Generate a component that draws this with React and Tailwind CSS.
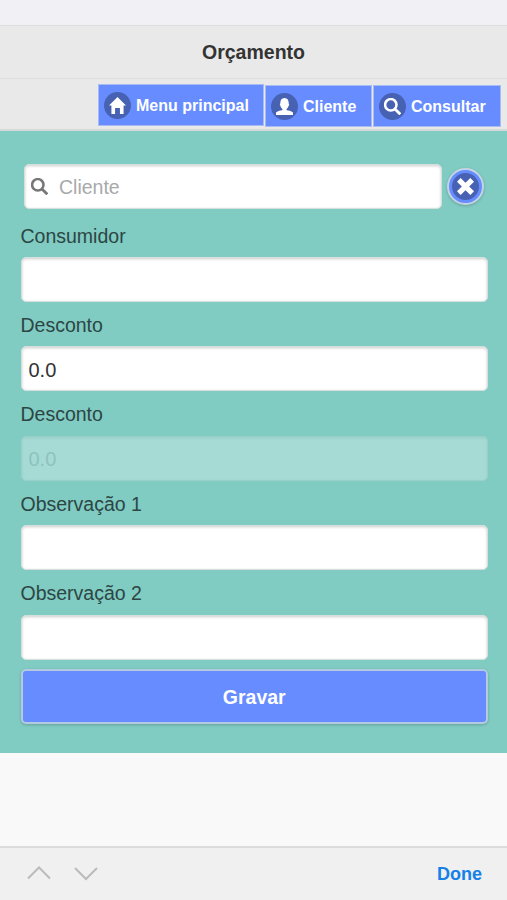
import React from 'react';

const shapes = {
  home: <polygon points="7,0 0,7 2,7 2,14 5,14 5,9 9,9 9,14 12,14 12,7 14,7" />,
  user: (
    <path d="M8.9,10.1C8.65,9.7,8.65,9.35,8.7,9C9.6,8.4,10.15,7.5,10.35,6.4C10.75,6.2,10.8,5.9,10.8,5.4C10.8,4.9,10.7,4.7,10.45,4.5C10.6,1.7,9.4,0,7,0C4.6,0,3.4,1.7,3.55,4.5C3.3,4.7,3.2,4.9,3.2,5.4C3.2,5.9,3.25,6.2,3.65,6.4C3.85,7.5,4.4,8.4,5.3,9C5.35,9.35,5.35,9.7,5.1,10.1C1.5,10.5,0,12,0,12V14H14V12C14,12,12.5,10.5,8.9,10.1z" />
  ),
  search: (
    <g fill="none" stroke="currentColor" strokeWidth="2.1">
      <circle cx="5.6" cy="5.6" r="4.7" />
      <path d="M8.8 8.8L13.4 13.4" strokeWidth="2.3" />
    </g>
  ),
  remove: <polygon points="14,3 11,0 7,4 3,0 0,3 4,7 0,11 3,14 7,10 11,14 14,11 10,7" />,
};

function Glyph({ name, className }) {
  return (
    <svg viewBox="0 0 14 14" className={className} fill="currentColor" aria-hidden="true">
      {shapes[name]}
    </svg>
  );
}

function NavButton({ icon, label, className }) {
  return (
    <button
      className={`flex h-[42px] items-center border border-[#a9bbf3] bg-[#668cff] pl-[5px] text-[16px] font-bold text-white ${className}`}
    >
      <span className="mr-[5px] flex size-[27px] shrink-0 items-center justify-center rounded-full bg-[#4862b3]">
        <Glyph name={icon} className="size-[17px]" />
      </span>
      <span className="whitespace-nowrap pt-px">{label}</span>
    </button>
  );
}

const inputStyle =
  'block h-[45px] w-full rounded-[5px] border border-[#d5dfdd] bg-white px-[7px] pt-[3px] text-[20px] shadow-[inset_0_1px_3px_rgba(0,0,0,0.2)] outline-none';

function Field({ label, value = '', disabled = false }) {
  return (
    <label className="block h-[89.4px]">
      <span className="block h-[44px] pt-[9.5px] text-[19.5px] leading-[26px] text-[#2c4644]">{label}</span>
      <input
        className={`${inputStyle} ${disabled ? 'text-[#b0b0b0] opacity-30' : 'text-[#333]'}`}
        defaultValue={value}
        disabled={disabled}
      />
    </label>
  );
}

export default function App() {
  return (
    <div className="flex h-[900px] w-[507px] flex-col overflow-hidden bg-[#f9f9f9] font-['Liberation_Sans',Arial,sans-serif]">
      <div className="h-[25px] shrink-0 bg-[#f0f0f5]" />
      <header className="flex h-[54px] shrink-0 items-center justify-center border-y border-[#dddddd] bg-[#e9e9e9]">
        <h1 className="pt-[2px] text-[19.5px] font-bold text-[#333]">Orçamento</h1>
      </header>
      <nav className="flex h-[52px] shrink-0 items-start justify-end gap-px border-b-2 border-[#d5d9d8] bg-[#e9e9e9] pt-[5px] pr-[6px]">
        <NavButton icon="home" label="Menu principal" className="w-[166px]" />
        <NavButton icon="user" label="Cliente" className="mt-px w-[107px]" />
        <NavButton icon="search" label="Consultar" className="mt-px w-[128px]" />
      </nav>
      <main className="h-[622px] shrink-0 bg-[#80cbc2] pt-[33px] pr-[19px] pl-[20.5px]">
        <div className="flex h-[49px] items-start pl-[3.5px]">
          <div className="flex h-[45px] w-[418px] items-center rounded-[5px] border border-[#d5dfdd] bg-white pl-[6px] shadow-[inset_0_1px_3px_rgba(0,0,0,0.2)]">
            <Glyph name="search" className="size-[17px] text-[#777]" />
            <input
              className="ml-[11px] h-full w-[360px] bg-transparent pt-[2px] text-[19.5px] text-[#333] outline-none placeholder:text-[#a9a9a9]"
              placeholder="Cliente"
            />
          </div>
          <button className="mt-[4px] ml-[5px] flex size-[37px] items-center justify-center rounded-full border-2 border-[#c3d4e2] bg-[#668cff] shadow-[0_1px_3px_rgba(0,0,0,0.2)]">
            <span className="flex size-[27px] items-center justify-center rounded-full bg-[#4862b3] text-white">
              <Glyph name="remove" className="size-[17px]" />
            </span>
          </button>
        </div>
        <Field label="Consumidor" />
        <Field label="Desconto" value="0.0" />
        <Field label="Desconto" value="0.0" disabled />
        <Field label="Observação 1" />
        <Field label="Observação 2" />
        <button className="mt-[9px] flex h-[55px] w-full items-center justify-center rounded-[5px] border-2 border-[#b3cbe0] bg-[#668cff] pt-[2px] text-[19.5px] font-bold text-white shadow-[0_1px_3px_rgba(0,0,0,0.2)]">
          Gravar
        </button>
      </main>
      <footer className="mt-auto flex h-[54px] shrink-0 items-center border-t-2 border-[#dcdcdc] bg-[#f0f0f0] pr-[25px] pl-[27px]">
        <svg viewBox="0 0 72 16" className="h-4 w-[72px]" fill="none" stroke="#bbbbbb" strokeWidth="2" aria-hidden="true">
          <path d="M1 12.5L12 1.5L23 12.5M48 2L59 13L70 2" />
        </svg>
        <button className="ml-auto text-[18px] font-bold text-[#1480e8]">Done</button>
      </footer>
    </div>
  );
}
